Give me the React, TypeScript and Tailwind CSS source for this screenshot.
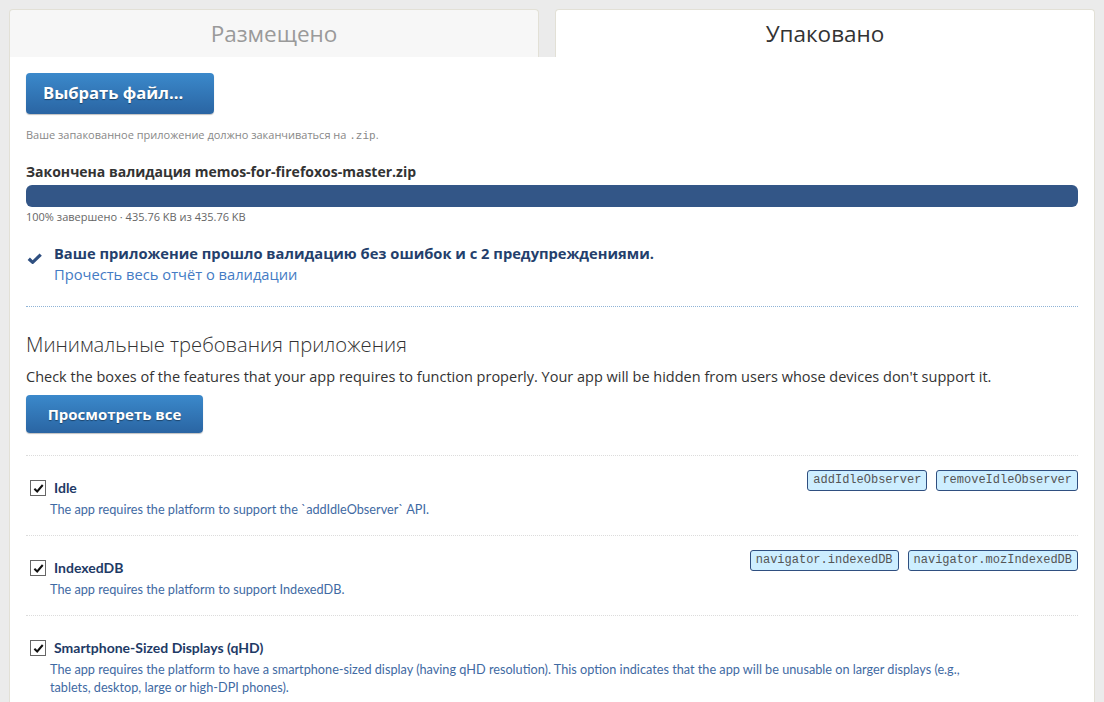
import React from "react";

const body = { fontFamily: '"Open Sans", "Noto Sans", sans-serif' };
const lato = { fontFamily: 'Lato, "Open Sans", sans-serif' };
const mono = { fontFamily: '"Liberation Mono", "DejaVu Sans Mono", monospace' };

function Tag({ children }: { children: React.ReactNode }) {
  return (
    <span
      className="inline-block h-[21px] px-[5px] leading-[19px] text-[12px] text-[#555] bg-[#cdeeff] border border-[#2f4f80] rounded-[3px]"
      style={mono}
    >
      {children}
    </span>
  );
}

function Check() {
  return (
    <span className="mt-[1px] flex h-[16px] w-[16px] shrink-0 items-center justify-center border border-[#666] bg-white">
      <svg viewBox="0 0 12 12" className="h-[11px] w-[11px]">
        <path d="M1.5 6.2 L4.6 9.2 L10.6 2.2" fill="none" stroke="#111" strokeWidth="2.2" />
      </svg>
    </span>
  );
}

function Feature({
  title,
  desc,
  tags,
}: {
  title: string;
  desc: React.ReactNode;
  tags?: string[];
}) {
  return (
    <div className="border-t border-dotted border-[#dcdcdc] pt-[14px] pb-[17px]" style={lato}>
      <div className="flex items-start justify-between">
        <div className="flex flex-col pt-[8px]">
          <div className="flex items-center gap-[8px] pl-[4px]">
            <Check />
            <span className="text-[14px] font-bold text-[#1e3a66] leading-[20px]">{title}</span>
          </div>
          <div className="max-w-[954px] pl-[24px] mt-[2px] text-[12.7px] leading-[18px] text-[#3f6aa3]">{desc}</div>
        </div>
        {tags && (
          <div className="flex shrink-0 gap-[9px]">
            {tags.map((t) => (
              <Tag key={t}>{t}</Tag>
            ))}
          </div>
        )}
      </div>
    </div>
  );
}

export default function App() {
  return (
    <div className="min-h-[702px] w-full bg-[#ebebeb] px-[9px] pt-[9px] overflow-hidden" style={body}>
      {/* tabs */}
      <div className="flex gap-[16px]">
        <div className="flex h-[48px] flex-1 items-center justify-center rounded-t-[4px] border border-b-0 border-[#e2e0d6] bg-[#f7f7f7] text-[22.5px] text-[#9a9a9a]">
          Размещено
        </div>
        <div className="flex h-[48px] w-[540px] items-center justify-center rounded-t-[4px] border border-b-0 border-[#e2e0d6] bg-white text-[22.5px] text-[#333]">
          Упаковано
        </div>
      </div>

      <div className="bg-white border border-t-0 border-[#e2e0d6] px-[16px] pt-[16px] pb-[20px]">
        <button
          className="h-[41px] w-[188px] rounded-[4px] bg-gradient-to-b from-[#3b89cb] to-[#2a65a3] pl-[17px] text-left text-[16.6px] font-bold text-white shadow-[0_1px_1px_rgba(0,0,0,0.25)] [text-shadow:0_1px_1px_rgba(0,0,0,0.4)]"
        >
          Выбрать файл...
        </button>

        <div className="mt-[13px] text-[11px] text-[#888]">
          Ваше запакованное приложение должно заканчиваться на <span style={mono}>.zip</span>.
        </div>

        <div className="mt-[16px] text-[14px] font-bold text-[#333]">
          Закончена валидация memos-for-firefoxos-master.zip
        </div>
        <div className="mt-[3px] h-[22px] w-full rounded-[6px] bg-[#335687]" />
        <div className="mt-[2px] text-[11px] text-[#666]">100% завершено · 435.76 KB из 435.76 KB</div>

        <div className="mt-[18px] flex items-start gap-[11px]">
          <svg viewBox="0 0 16 12" className="mt-[10px] h-[11px] w-[17px] shrink-0">
            <path d="M0.5 7.5 L3 5 L6 8 L13.5 0.5 L16 3 L6 12.5 Z" fill="#2f4f80" />
          </svg>
          <div className="flex flex-col">
            <span className="text-[14.7px] font-bold leading-[21px] text-[#243f6c]">
              Ваше приложение прошло валидацию без ошибок и с 2 предупреждениями.
            </span>
            <span className="text-[14.7px] leading-[20px] text-[#447bc4]">Прочесть весь отчёт о валидации</span>
          </div>
        </div>

        <div className="mt-[22px] border-t border-dotted border-[#8fb3d6]" />

        <div className="mt-[23px] text-[20.2px] leading-[28px] font-light text-[#333]">Минимальные требования приложения</div>
        <div className="mt-[8px] text-[14.5px] text-[#333]">
          Check the boxes of the features that your app requires to function properly. Your app will be hidden from
          users whose devices don't support it.
        </div>
        <button
          className="mt-[7px] mb-[22px] h-[38px] w-[177px] rounded-[4px] bg-gradient-to-b from-[#3b89cb] to-[#2a65a3] text-[15px] font-bold text-white shadow-[0_1px_1px_rgba(0,0,0,0.25)] [text-shadow:0_1px_1px_rgba(0,0,0,0.4)]"
        >
          Просмотреть все
        </button>

        <Feature
          title="Idle"
          desc="The app requires the platform to support the `addIdleObserver` API."
          tags={["addIdleObserver", "removeIdleObserver"]}
        />
        <Feature
          title="IndexedDB"
          desc="The app requires the platform to support IndexedDB."
          tags={["navigator.indexedDB", "navigator.mozIndexedDB"]}
        />
        <Feature
          title="Smartphone-Sized Displays (qHD)"
          desc="The app requires the platform to have a smartphone-sized display (having qHD resolution). This option indicates that the app will be unusable on larger displays (e.g., tablets, desktop, large or high-DPI phones)."
        />
      </div>
    </div>
  );
}
